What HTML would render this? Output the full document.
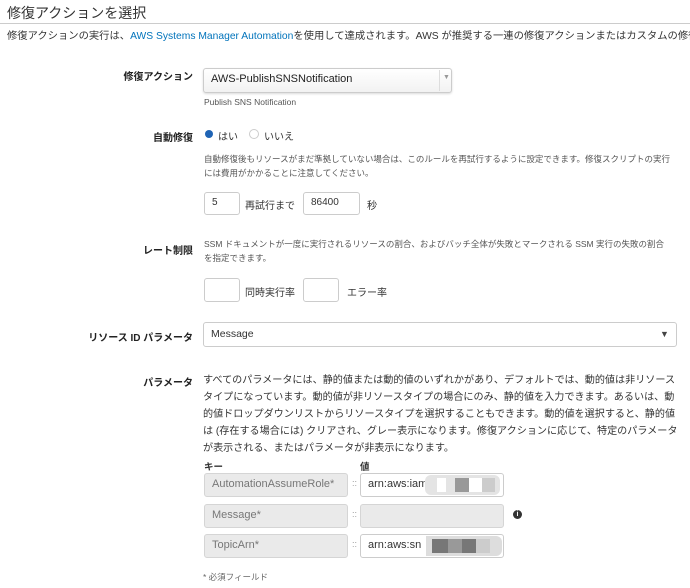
<!DOCTYPE html>
<html><head><meta charset="utf-8"><style>
body{margin:0;width:690px;height:588px;background:#fff;font-family:"Liberation Sans","Noto Sans CJK JP",sans-serif;color:#333;position:relative;overflow:hidden}
.a{position:absolute;white-space:nowrap}
.lbl{position:absolute;left:0;width:193px;font-weight:bold;font-size:10px;color:#222;text-align:right;white-space:nowrap}
.box{position:absolute;border:1px solid #ccc;border-radius:3px;background:#fff;box-sizing:border-box}
.key{position:absolute;border:1px solid #d5d5d5;border-radius:3px;background:#eaeaea;box-sizing:border-box;font-size:11px;color:#777;padding-left:7px;line-height:21px}
.val{position:absolute;border:1px solid #ccc;border-radius:3px;background:#fff;box-sizing:border-box;font-size:11px;color:#333;padding-left:7px;line-height:21px;overflow:hidden}
.sm{font-size:8.5px;color:#555}
</style></head><body>
<div class="a" style="left:7px;top:3px;font-size:14px;color:#333">修復アクションを選択</div>
<div class="a" style="left:0;top:23px;width:690px;height:1px;background:#ccc"></div>
<div class="a" style="left:7px;top:27px;font-size:10.3px;color:#333">修復アクションの実行は、<span style="color:#0073bb">AWS Systems Manager Automation</span>を使用して達成されます。AWS が推奨する一連の修復アクションまたはカスタムの修復ア</div>

<div class="lbl" style="top:68px">修復アクション</div>
<div class="box" style="left:203px;top:68px;width:249px;height:25px;background:linear-gradient(#fff,#f2f2f2);box-shadow:0 1px 2px rgba(0,0,0,.15)"></div>
<div class="a" style="left:211px;top:73px;font-size:11px;color:#222">AWS-PublishSNSNotification</div>
<div class="a" style="left:439px;top:70px;width:1px;height:21px;background:#ddd"></div>
<div class="a" style="left:443px;top:74px;font-size:7px;color:#999">▼</div>
<div class="a sm" style="left:204px;top:97px">Publish SNS Notification</div>

<div class="lbl" style="top:129px">自動修復</div>
<div class="a" style="left:205px;top:130px;width:8px;height:8px;border-radius:50%;background:#1f64b5"></div>
<div class="a" style="left:218px;top:128px;font-size:10px">はい</div>
<div class="a" style="left:249px;top:129px;width:10px;height:10px;border-radius:50%;border:1px solid #ccc;box-sizing:border-box"></div>
<div class="a" style="left:264px;top:128px;font-size:10px">いいえ</div>
<div class="a sm" style="left:204px;top:152px;line-height:14px">自動修復後もリソースがまだ準拠していない場合は、このルールを再試行するように設定できます。修復スクリプトの実行<br>には費用がかかることに注意してください。</div>

<div class="box" style="left:204px;top:192px;width:36px;height:23px"></div>
<div class="a" style="left:212px;top:197px;font-size:10px">5</div>
<div class="a" style="left:245px;top:197px;font-size:10px">再試行まで</div>
<div class="box" style="left:303px;top:192px;width:57px;height:23px"></div>
<div class="a" style="left:311px;top:197px;font-size:10px">86400</div>
<div class="a" style="left:367px;top:197px;font-size:10px">秒</div>

<div class="lbl" style="top:242px">レート制限</div>
<div class="a sm" style="left:204px;top:237px;line-height:14px">SSM ドキュメントが一度に実行されるリソースの割合、およびバッチ全体が失敗とマークされる SSM 実行の失敗の割合<br>を指定できます。</div>
<div class="box" style="left:204px;top:278px;width:36px;height:24px"></div>
<div class="a" style="left:245px;top:284px;font-size:10px">同時実行率</div>
<div class="box" style="left:303px;top:278px;width:36px;height:24px"></div>
<div class="a" style="left:347px;top:284px;font-size:10px">エラー率</div>

<div class="lbl" style="top:329px">リソース ID パラメータ</div>
<div class="box" style="left:203px;top:322px;width:474px;height:25px"></div>
<div class="a" style="left:211px;top:328px;font-size:10.5px">Message</div>
<div class="a" style="left:660px;top:329px;font-size:9px;color:#444">▼</div>

<div class="lbl" style="top:374px">パラメータ</div>
<div class="a" style="left:203px;top:372px;font-size:10.1px;line-height:17px;color:#333">すべてのパラメータには、静的値または動的値のいずれかがあり、デフォルトでは、動的値は非リソース<br>タイプになっています。動的値が非リソースタイプの場合にのみ、静的値を入力できます。あるいは、動<br>的値ドロップダウンリストからリソースタイプを選択することもできます。動的値を選択すると、静的値<br>は (存在する場合には) クリアされ、グレー表示になります。修復アクションに応じて、特定のパラメータ<br>が表示される、またはパラメータが非表示になります。</div>

<div class="a" style="left:204px;top:459px;font-size:9.5px;font-weight:bold">キー</div>
<div class="a" style="left:360px;top:459px;font-size:9.5px;font-weight:bold">値</div>
<div class="key" style="left:204px;top:473px;width:144px;height:24px">AutomationAssumeRole*</div>
<div class="key" style="left:204px;top:504px;width:144px;height:24px">Message*</div>
<div class="key" style="left:204px;top:534px;width:144px;height:24px">TopicArn*</div>
<div class="a" style="left:352px;top:478px;font-size:9px;color:#999">::</div>
<div class="a" style="left:352px;top:509px;font-size:9px;color:#999">::</div>
<div class="a" style="left:352px;top:539px;font-size:9px;color:#999">::</div>
<div class="val" style="left:360px;top:473px;width:144px;height:24px">arn:aws:iam</div>
<div class="a" style="left:425px;top:475px;width:75px;height:20px;background:#e4e4e4;border-radius:6px"></div>
<div class="a" style="left:437px;top:478px;width:9px;height:14px;background:#fff"></div>
<div class="a" style="left:455px;top:478px;width:14px;height:14px;background:#999"></div>
<div class="a" style="left:469px;top:478px;width:13px;height:14px;background:#fff"></div>
<div class="a" style="left:482px;top:478px;width:13px;height:14px;background:#ccc"></div>
<div class="val" style="left:360px;top:504px;width:144px;height:24px;background:#eaeaea;border-color:#d5d5d5"></div>
<div class="a" style="left:513px;top:510px;width:9px;height:9px;border-radius:50%;background:#333;color:#fff;font-size:7px;font-weight:bold;text-align:center;line-height:9px">i</div>
<div class="val" style="left:360px;top:534px;width:144px;height:24px">arn:aws:sn</div>
<div class="a" style="left:426px;top:536px;width:76px;height:20px;background:#ddd;border-radius:0 6px 6px 0"></div>
<div class="a" style="left:432px;top:539px;width:16px;height:14px;background:#777"></div>
<div class="a" style="left:448px;top:539px;width:14px;height:14px;background:#999"></div>
<div class="a" style="left:462px;top:539px;width:14px;height:14px;background:#777"></div>
<div class="a" style="left:476px;top:539px;width:14px;height:14px;background:#ccc"></div>
<div class="a sm" style="left:203px;top:571px;color:#666">* 必須フィールド</div>
</body></html>
